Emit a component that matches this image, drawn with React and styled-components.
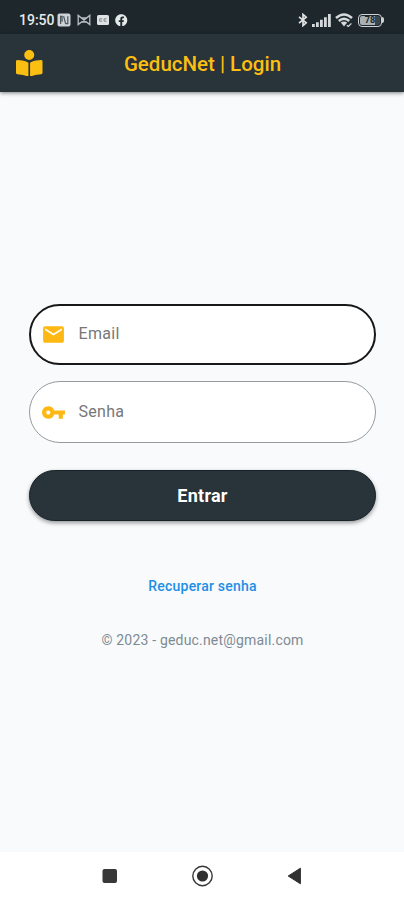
import React from "react";
import styled, { createGlobalStyle } from "styled-components";
import { FaBookReader, FaFacebook } from "react-icons/fa";
import { MdEmail, MdVpnKey } from "react-icons/md";

function StatusBar() {
  return (
    <StatusWrapper>
      <StatusLeft>
        <Clock>19:50</Clock>
        <svg width="14" height="14" viewBox="0 0 14 14">
          <rect x="0.5" y="0.5" width="13" height="13" rx="2" fill="#ced3d5" />
          <path
            d="M3.6 11V3.4h1.5v5.4M6.6 3.2l2 7.4M10.8 3.2v7.4H8.4"
            fill="none"
            stroke="#4b555b"
            strokeWidth="1.2"
          />
        </svg>
        <svg width="14" height="12" viewBox="0 0 14 12">
          <path
            d="M1.2 1.4v9.2L4.6 8h4.8l3.4 2.6V1.4L9.4 4H4.6zM1.2 1.4l8.2 6.6M12.8 1.4L4.6 8"
            fill="none"
            stroke="#b9bfc2"
            strokeWidth="1.3"
          />
        </svg>
        <svg width="12" height="10" viewBox="0 0 12 10">
          <rect width="12" height="10" rx="1.5" fill="#dfe2e3" />
          <path
            d="M5.2 3.8H2.7v2.4h2.5M9.6 3.8H7.1v2.4h2.5"
            fill="none"
            stroke="#7d868b"
            strokeWidth="1"
          />
        </svg>
        <FaFacebook size={12.5} />
      </StatusLeft>
      <StatusRight>
        <svg width="10" height="14" viewBox="0 0 10 14">
          <path
            d="M1 3.8l7.2 6L5 12.6V1.4l3.2 2.8L1 10.2"
            fill="none"
            stroke="#dfe2e3"
            strokeWidth="1.7"
          />
        </svg>
        <svg width="19" height="13" viewBox="0 0 19 13">
          <path
            d="M0 10h2.8v3H0zM4 8.2h2.8V13H4zM8 5.8h2.8V13H8zM12 3.2h2.8V13H12zM16 0h2.8v13H16z"
            fill="#d5d9db"
          />
        </svg>
        <svg width="18" height="14" viewBox="0 0 18 14">
          <path
            d="M1 5Q9-2 17 5M3.8 8Q9 3.5 14.2 8"
            fill="none"
            stroke="#d5d9db"
            strokeWidth="2.5"
          />
          <path d="M5.8 9.6Q9 7.2 12.2 9.6L9 13.4z" fill="#d5d9db" />
          <path d="M11.8 12.4l1.6 1 3-3" fill="none" stroke="#d5d9db" strokeWidth="1.3" />
        </svg>
        <Battery>
          <BatteryLevel>78</BatteryLevel>
          <BatteryTip />
        </Battery>
      </StatusRight>
    </StatusWrapper>
  );
}

function Field({ icon, label, type, focused }) {
  return (
    <FieldWrapper $focused={focused}>
      <FieldIcon>{icon}</FieldIcon>
      <Input type={type} placeholder={label} aria-label={label} />
    </FieldWrapper>
  );
}

function NavBar() {
  return (
    <NavWrapper>
      <NavButton aria-label="recents">
        <svg width="16" height="16" viewBox="0 0 16 16">
          <rect x="0.5" y="1" width="14.5" height="14" rx="2" fill="#383838" />
        </svg>
      </NavButton>
      <NavButton aria-label="home">
        <svg width="22" height="22" viewBox="0 0 22 22">
          <circle cx="11.5" cy="11" r="9.7" fill="none" stroke="#383838" strokeWidth="1.4" />
          <circle cx="11.5" cy="11" r="5.6" fill="#303030" />
        </svg>
      </NavButton>
      <NavButton aria-label="back">
        <svg width="16" height="18" viewBox="0 0 16 18">
          <path d="M14.4 1.2v15.6L2.2 9z" fill="#303030" stroke="#303030" strokeLinejoin="round" />
        </svg>
      </NavButton>
    </NavWrapper>
  );
}

function App() {
  return (
    <Screen>
      <GlobalStyle />
      <StatusBar />
      <AppBar>
        <FaBookReader size={26.5} />
        <Title>GeducNet | Login</Title>
      </AppBar>
      <Main>
        <Field focused type="email" label="Email" icon={<MdEmail size={25} />} />
        <Field type="password" label="Senha" icon={<MdVpnKey size={25} />} />
        <SubmitBtn>Entrar</SubmitBtn>
        <RecoverLink href="#">Recuperar senha</RecoverLink>
        <Copyright>© 2023 - geduc.net@gmail.com</Copyright>
      </Main>
      <NavBar />
    </Screen>
  );
}

const GlobalStyle = createGlobalStyle`
  * {
    box-sizing: border-box;
  }

  body {
    margin: 0;
    font-family: Roboto, "Liberation Sans", sans-serif;
  }
`;

const Screen = styled.div`
  display: flex;
  flex-direction: column;
  height: 900px;
  background: #f8fafc;
`;

const StatusWrapper = styled.div`
  display: flex;
  justify-content: space-between;
  align-items: center;
  height: 34px;
  padding: 6px 20px 0 19px;
  background: #1d272c;
  color: #e6e9ea;
`;

const StatusLeft = styled.div`
  display: flex;
  align-items: center;
  gap: 6px;
`;

const Clock = styled.span`
  width: 35px;
  margin-right: -3px;
  font-size: 14px;
  font-weight: 500;
`;

const StatusRight = styled.div`
  display: flex;
  align-items: center;
  gap: 4px;
`;

const Battery = styled.div`
  display: flex;
  align-items: center;
  margin-left: 1px;
`;

const BatteryLevel = styled.span`
  width: 24px;
  height: 13px;
  border: 1.5px solid #cdd2d4;
  border-radius: 4px;
  background: linear-gradient(to right, #a9b0b3 75%, #3b454b 75%) content-box;
  padding: 1px;
  color: #1d272c;
  font-size: 9px;
  font-weight: 700;
  line-height: 9px;
  text-align: center;
`;

const BatteryTip = styled.span`
  width: 2px;
  height: 6px;
  border-radius: 0 2px 2px 0;
  background: #cdd2d4;
`;

const AppBar = styled.header`
  display: grid;
  grid-template-columns: 27px 1fr 27px;
  align-items: center;
  height: 58px;
  padding: 0 15px 0 16px;
  background: #28333a;
  box-shadow: 0 1px 4px rgba(0, 0, 0, 0.5);
  color: #fbbf12;
`;

const Title = styled.h1`
  margin: 2px 0 0;
  font-size: 20.5px;
  font-weight: 500;
  text-align: center;
`;

const Main = styled.main`
  display: flex;
  flex: 1;
  flex-direction: column;
  padding: 212px 28px 0 29px;
`;

const FieldWrapper = styled.label`
  display: flex;
  align-items: center;
  height: ${(props) => (props.$focused ? "61px" : "62px")};
  margin-bottom: 16px;
  padding: 0 20px 0 ${(props) => (props.$focused ? "10px" : "11px")};
  border: ${(props) => (props.$focused ? "2px solid #181818" : "1px solid #979b9d")};
  border-radius: 31px;
  background: #ffffff;
`;

const FieldIcon = styled.span`
  display: flex;
  margin-right: 12.5px;
  color: #fdb813;
`;

const Input = styled.input`
  flex: 1;
  min-width: 0;
  padding: 0 0 2px;
  border: none;
  outline: none;
  background: transparent;
  font-family: inherit;
  font-size: 16px;
  letter-spacing: 0.3px;

  &::placeholder {
    color: #777777;
  }
`;

const SubmitBtn = styled.button`
  height: 51px;
  margin-top: 11px;
  border: 1px solid #172126;
  border-radius: 26px;
  background: #28333a;
  box-shadow: 0 2px 4px rgba(0, 0, 0, 0.4);
  color: #ffffff;
  font-family: inherit;
  font-size: 18px;
  font-weight: 700;
  letter-spacing: 0.25px;
`;

const RecoverLink = styled.a`
  align-self: center;
  margin-top: 56px;
  color: #1e8fe6;
  font-size: 14px;
  font-weight: 500;
  letter-spacing: 0.2px;
  line-height: 18px;
  text-decoration: none;
`;

const Copyright = styled.p`
  margin: 36px 0 0;
  color: #7f8b92;
  font-size: 14px;
  letter-spacing: 0.19px;
  line-height: 18px;
  text-align: center;
`;

const NavWrapper = styled.nav`
  display: flex;
  justify-content: center;
  align-items: center;
  gap: 62px;
  height: 48px;
  background: #ffffff;
`;

const NavButton = styled.button`
  display: flex;
  justify-content: center;
  align-items: center;
  width: 30px;
  height: 30px;
  padding: 0;
  border: none;
  background: transparent;
`;

export default App;
